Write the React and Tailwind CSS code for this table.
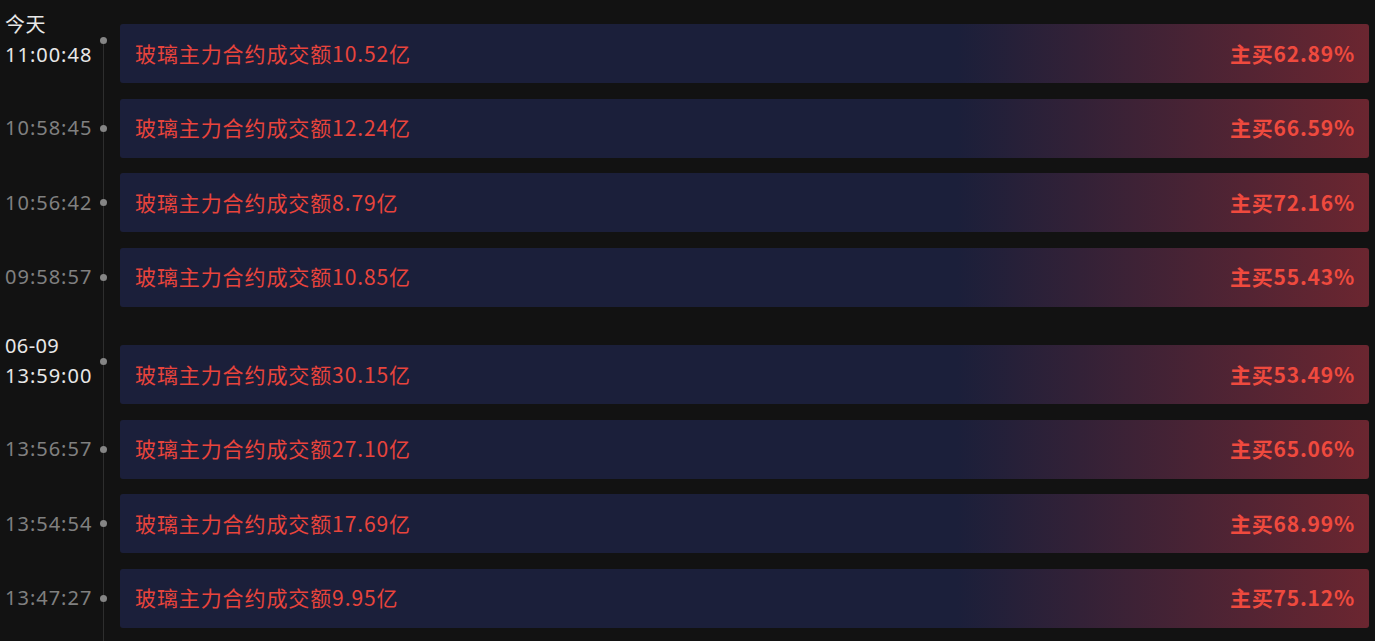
const groups = [
  {
    day: '今天',
    items: [
      { time: '11:00:48', amount: '10.52', ratio: '62.89' },
      { time: '10:58:45', amount: '12.24', ratio: '66.59' },
      { time: '10:56:42', amount: '8.79', ratio: '72.16' },
      { time: '09:58:57', amount: '10.85', ratio: '55.43' },
    ],
  },
  {
    day: '06-09',
    items: [
      { time: '13:59:00', amount: '30.15', ratio: '53.49' },
      { time: '13:56:57', amount: '27.10', ratio: '65.06' },
      { time: '13:54:54', amount: '17.69', ratio: '68.99' },
      { time: '13:47:27', amount: '9.95', ratio: '75.12' },
    ],
  },
];

const sans = "font-['Noto_Sans','Noto_Sans_CJK_SC',sans-serif]";
const cjk = "font-['Noto_Sans_CJK_SC','Noto_Sans',sans-serif]";

function Row({ day, item, first, groupStart }) {
  return (
    <div className={`flex items-center ${groupStart && !first ? 'mt-[38.5px]' : first ? '' : 'mt-[15.5px]'}`}>
      <div className={`flex items-center w-[120px] shrink-0 ${day ? '-mt-[27px]' : ''}`}>
        <div className={`w-[100px] pl-[5px] ${sans} text-[20px] leading-[30px] tracking-[1px]`}>
          {day && <div className="text-[#e8e8e8] tracking-[0.4px]">{day}</div>}
          <div className={day ? 'text-[#e8e8e8]' : 'text-[#808080]'}>{item.time}</div>
        </div>
        <div className="relative z-10 w-[7px] h-[7px] rounded-full bg-[#858585]" />
      </div>
      <div className="flex-1 mr-[6px] h-[59px] rounded-[3px] flex items-center justify-between pl-[15px] pr-[14px] bg-[linear-gradient(90deg,#1b1f3a_0%,#1b1f3a_67%,#6b2630_100%)]">
        <span className={`${cjk} text-[21px] text-[#e8443c] tracking-[0.9px]`}>玻璃主力合约成交额{item.amount}亿</span>
        <span className={`${cjk} text-[21px] font-bold text-[#ef4a3e] tracking-[0.8px]`}>主买{item.ratio}%</span>
      </div>
    </div>
  );
}

export default function App() {
  return (
    <div className="relative min-h-[641px] bg-[#121212] pt-[24px] pb-[13px] overflow-hidden">
      <div className="absolute left-[103px] top-[41px] bottom-0 w-px bg-[#2e2e2e]" />
      {groups.map((g, gi) =>
        g.items.map((item, i) => (
          <Row
            key={item.time}
            day={i === 0 ? g.day : null}
            item={item}
            first={gi === 0 && i === 0}
            groupStart={i === 0}
          />
        ))
      )}
    </div>
  );
}
